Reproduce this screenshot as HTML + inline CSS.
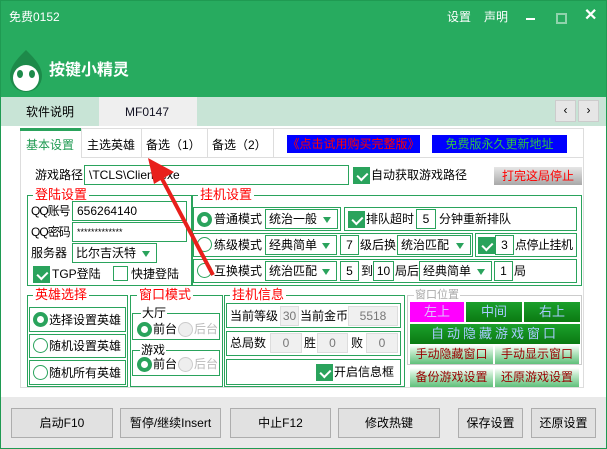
<!DOCTYPE html><html><head><meta charset="utf-8"><style>
*{margin:0;padding:0;box-sizing:border-box}
body{width:607px;height:449px;overflow:hidden;background:#fff;font-family:"Liberation Sans","Noto Sans CJK SC",sans-serif;font-size:12px;color:#000;position:relative}
.a{position:absolute}
.t{position:absolute;white-space:nowrap;line-height:1;font-size:12px}
.gb{position:absolute;border:1px solid #2aa35c}
.lbl{position:absolute;background:#fff;color:#f00;font-size:13px;line-height:1;padding:0 2px;white-space:nowrap}
.in{position:absolute;border:1px solid #2aa35c;background:#fff;font-size:12px;line-height:18px;padding-left:4px;white-space:nowrap;overflow:hidden}
.num{position:absolute;border:1px solid #2aa35c;background:#fff;text-align:center;font-size:12px;line-height:18px}
.sel{position:absolute;border:1px solid #2aa35c;background:#fff;font-size:12px;line-height:18px;padding-left:3px;white-space:nowrap}
.sel:after{content:"";position:absolute;right:6px;top:7px;border-left:4px solid transparent;border-right:4px solid transparent;border-top:6px solid #2aa35c}
.cb{position:absolute;width:17px;height:17px;background:#2aa35c}
.cb:after{content:"";position:absolute;left:3px;top:2px;width:8px;height:5px;border-left:2px solid #fff;border-bottom:2px solid #fff;transform:rotate(-45deg) translate(-1px,3px)}
.cbo{position:absolute;width:15px;height:15px;border:1px solid #2aa35c;background:#fff}
.rd{position:absolute;width:15px;height:15px;border-radius:50%;border:4px solid #2aa35c;background:#fff}
.ro{position:absolute;width:15px;height:15px;border-radius:50%;border:1px solid #2aa35c;background:#fff}
.rg{position:absolute;width:15px;height:15px;border-radius:50%;border:1px solid #ccc;background:#eee}
.gbtn{position:absolute;background:linear-gradient(#1ba02c,#0b7a12);color:#a8ccff;text-align:center;font-size:13px;line-height:20px}
.lbtn{position:absolute;background:linear-gradient(#fff 0%,#c8ecd0 30%,#5fc07a 100%);color:#900;text-align:center;font-size:12px;line-height:19px;white-space:nowrap}
.bb{position:absolute;top:408px;height:30px;border:1px solid #adadad;background:#e1e1e1;text-align:center;line-height:28px;font-size:12px}
.ib{position:absolute;border:1px solid #ddd;background:#f0f0f0;color:#777;text-align:center;font-size:12px;line-height:18px}
</style></head><body>
<div class="a" style="left:0;top:0;width:607px;height:449px;border:1px solid #1f9a52"></div>
<div class="a" style="left:1px;top:1px;width:605px;height:96px;background:#27ab5f"></div>
<div class="t" style="left:9px;top:11px;color:#fff">免费0152</div>
<div class="t" style="left:447px;top:11px;color:#fff">设置</div>
<div class="t" style="left:484px;top:11px;color:#fff">声明</div>
<div class="a" style="left:526px;top:18px;width:9px;height:2px;background:#fff"></div>
<div class="a" style="left:556px;top:13px;width:11px;height:11px;border:2px solid #8fd3ac"></div>
<div class="t" style="left:584px;top:8px;color:#fff;font-size:16px;font-weight:bold">✕</div>
<svg class="a" style="left:8px;top:48px" width="36" height="46" viewBox="0 0 36 46"><path d="M18 2 C26 10 34 18 34 28 A16 16 0 0 1 2 28 C2 18 10 10 18 2Z" fill="#1d8a4a"/><ellipse cx="18" cy="30" rx="13" ry="13" fill="#fff"/><ellipse cx="12" cy="26" rx="3" ry="4" fill="#1d8a4a"/><ellipse cx="24" cy="26" rx="3" ry="4" fill="#1d8a4a"/></svg>
<div class="t" style="left:49px;top:63px;color:#fff;font-size:16px;font-weight:bold">按键小精灵</div>
<div class="a" style="left:1px;top:97px;width:605px;height:29px;background:#c8e4d6"></div>
<div class="t" style="left:26px;top:106px">软件说明</div>
<div class="a" style="left:99px;top:97px;width:98px;height:29px;background:#efefef"></div>
<div class="t" style="left:125px;top:106px;color:#112">MF0147</div>
<div class="a" style="left:555px;top:100px;width:21px;height:22px;background:#e6e6e6;border:1px solid #ccc;text-align:center;line-height:19px">‹</div>
<div class="a" style="left:578px;top:100px;width:21px;height:22px;background:#e6e6e6;border:1px solid #ccc;text-align:center;line-height:19px">›</div>
<div class="a" style="left:1px;top:126px;width:605px;height:271px;background:#fff"></div>
<div class="a" style="left:20px;top:128px;width:564px;height:260px;border:1px solid #ddd"></div>
<div class="a" style="left:20px;top:128px;width:62px;height:3px;background:#2aa35c"></div>
<div class="a" style="left:81px;top:128px;width:1px;height:30px;background:#ddd"></div>
<div class="a" style="left:141px;top:128px;width:1px;height:30px;background:#ddd"></div>
<div class="a" style="left:207px;top:128px;width:1px;height:30px;background:#ddd"></div>
<div class="a" style="left:273px;top:128px;width:1px;height:30px;background:#ddd"></div>
<div class="a" style="left:82px;top:157px;width:501px;height:1px;background:#ddd"></div>
<div class="t" style="left:26px;top:139px;color:#1f9a52">基本设置</div>
<div class="t" style="left:87px;top:139px">主选英雄</div>
<div class="t" style="left:146px;top:139px">备选（1）</div>
<div class="t" style="left:212px;top:139px">备选（2）</div>
<div class="a" style="left:287px;top:135px;width:133px;height:18px;background:#0000ff;color:#f00;font-size:12px;line-height:18px;text-align:center;white-space:nowrap">《点击试用购买完整版》</div>
<div class="a" style="left:432px;top:135px;width:135px;height:18px;background:#0000ff;color:#2ec04a;font-size:12px;line-height:18px;text-align:center">免费版永久更新地址</div>
<div class="t" style="left:35px;top:169px">游戏路径</div>
<div class="in" style="left:84px;top:165px;width:265px;height:20px">\TCLS\Client.exe</div>
<div class="cb" style="left:353px;top:167px"></div>
<div class="t" style="left:371px;top:169px">自动获取游戏路径</div>
<div class="a" style="left:494px;top:167px;width:88px;height:18px;background:linear-gradient(#e6e6e6,#a8a8a8);color:#f00;text-align:center;line-height:18px;font-size:12px">打完这局停止</div>
<div class="gb" style="left:27px;top:195px;width:165px;height:91px"></div>
<div class="lbl" style="left:33px;top:188px">登陆设置</div>
<div class="t" style="left:31px;top:205px;letter-spacing:-1px">QQ账号</div>
<div class="in" style="left:72px;top:201px;width:115px;height:20px">656264140</div>
<div class="t" style="left:31px;top:226px;letter-spacing:-1px">QQ密码</div>
<div class="in" style="left:72px;top:222px;width:115px;height:20px;font-size:9px">*************</div>
<div class="t" style="left:31px;top:247px">服务器</div>
<div class="sel" style="left:72px;top:243px;width:85px;height:20px">比尔吉沃特</div>
<div class="cb" style="left:33px;top:266px"></div>
<div class="t" style="left:52px;top:268px">TGP登陆</div>
<div class="cbo" style="left:113px;top:266px"></div>
<div class="t" style="left:131px;top:268px">快捷登陆</div>
<div class="gb" style="left:192px;top:195px;width:390px;height:91px"></div>
<div class="lbl" style="left:198px;top:188px">挂机设置</div>
<div class="gb" style="left:193px;top:207px;width:148px;height:24px"></div>
<div class="rd" style="left:197px;top:212px"></div>
<div class="t" style="left:214px;top:213px">普通模式</div>
<div class="sel" style="left:265px;top:209px;width:73px;height:20px">统治一般</div>
<div class="gb" style="left:344px;top:207px;width:233px;height:24px"></div>
<div class="cb" style="left:348px;top:211px"></div>
<div class="t" style="left:366px;top:213px">排队超时</div>
<div class="num" style="left:416px;top:209px;width:20px;height:20px">5</div>
<div class="t" style="left:439px;top:213px">分钟重新排队</div>
<div class="gb" style="left:193px;top:233px;width:280px;height:24px"></div>
<div class="ro" style="left:197px;top:237px"></div>
<div class="t" style="left:214px;top:239px">练级模式</div>
<div class="sel" style="left:265px;top:235px;width:72px;height:20px">经典简单</div>
<div class="num" style="left:340px;top:235px;width:19px;height:20px">7</div>
<div class="t" style="left:360px;top:239px">级后换</div>
<div class="sel" style="left:397px;top:235px;width:74px;height:20px">统治匹配</div>
<div class="gb" style="left:475px;top:233px;width:102px;height:24px"></div>
<div class="cb" style="left:478px;top:237px"></div>
<div class="num" style="left:495px;top:235px;width:19px;height:20px">3</div>
<div class="t" style="left:515px;top:239px;letter-spacing:-0.5px">点停止挂机</div>
<div class="gb" style="left:193px;top:259px;width:384px;height:24px"></div>
<div class="ro" style="left:197px;top:263px"></div>
<div class="t" style="left:214px;top:265px">互换模式</div>
<div class="sel" style="left:265px;top:261px;width:72px;height:20px">统治匹配</div>
<div class="num" style="left:340px;top:261px;width:19px;height:20px">5</div>
<div class="t" style="left:361px;top:265px">到</div>
<div class="num" style="left:373px;top:261px;width:21px;height:20px">10</div>
<div class="t" style="left:395px;top:265px">局后</div>
<div class="sel" style="left:419px;top:261px;width:73px;height:20px">经典简单</div>
<div class="num" style="left:494px;top:261px;width:19px;height:20px">1</div>
<div class="t" style="left:514px;top:265px">局</div>
<div class="gb" style="left:27px;top:295px;width:101px;height:92px"></div>
<div class="lbl" style="left:33px;top:288px">英雄选择</div>
<div class="gb" style="left:29px;top:307px;width:97px;height:25px"></div>
<div class="rd" style="left:33px;top:312px"></div><div class="t" style="left:49px;top:314px">选择设置英雄</div>
<div class="gb" style="left:29px;top:334px;width:97px;height:24px"></div>
<div class="ro" style="left:33px;top:338px"></div><div class="t" style="left:49px;top:340px">随机设置英雄</div>
<div class="gb" style="left:29px;top:360px;width:97px;height:25px"></div>
<div class="ro" style="left:33px;top:365px"></div><div class="t" style="left:49px;top:367px">随机所有英雄</div>
<div class="gb" style="left:130px;top:295px;width:93px;height:92px"></div>
<div class="lbl" style="left:137px;top:288px">窗口模式</div>
<div class="gb" style="left:132px;top:313px;width:88px;height:27px"></div>
<div class="t" style="left:141px;top:307px;background:#fff;padding:0 1px">大厅</div>
<div class="rd" style="left:137px;top:322px"></div><div class="t" style="left:153px;top:323px">前台</div>
<div class="rg" style="left:178px;top:322px"></div><div class="t" style="left:194px;top:323px;color:#bbb">后台</div>
<div class="gb" style="left:132px;top:350px;width:88px;height:26px"></div>
<div class="t" style="left:140px;top:344px;background:#fff;padding:0 1px">游戏</div>
<div class="rd" style="left:137px;top:357px"></div><div class="t" style="left:153px;top:358px">前台</div>
<div class="rg" style="left:178px;top:357px"></div><div class="t" style="left:194px;top:358px;color:#bbb">后台</div>
<div class="gb" style="left:224px;top:295px;width:181px;height:92px"></div>
<div class="lbl" style="left:230px;top:288px">挂机信息</div>
<div class="gb" style="left:226px;top:303px;width:175px;height:25px"></div>
<div class="t" style="left:230px;top:310px">当前等级</div>
<div class="ib" style="left:280px;top:306px;width:19px;height:20px">30</div>
<div class="t" style="left:300px;top:310px">当前金币</div>
<div class="ib" style="left:348px;top:306px;width:50px;height:20px">5518</div>
<div class="gb" style="left:226px;top:331px;width:175px;height:25px"></div>
<div class="t" style="left:230px;top:337px">总局数</div>
<div class="ib" style="left:270px;top:333px;width:32px;height:20px">0</div>
<div class="t" style="left:304px;top:337px">胜</div>
<div class="ib" style="left:317px;top:333px;width:31px;height:20px">0</div>
<div class="t" style="left:351px;top:337px">败</div>
<div class="ib" style="left:366px;top:333px;width:32px;height:20px">0</div>
<div class="gb" style="left:226px;top:359px;width:175px;height:26px"></div>
<div class="cb" style="left:316px;top:364px"></div>
<div class="t" style="left:334px;top:366px">开启信息框</div>
<div class="a" style="left:407px;top:295px;width:175px;height:70px;border:1px solid #ccc"></div>
<div class="t" style="left:414px;top:290px;background:#fff;color:#aaa;font-size:11px;padding:0 1px">窗口位置</div>
<div class="gbtn" style="left:410px;top:302px;width:54px;background:#ff00ff;color:#e0c0ff">左上</div>
<div class="gbtn" style="left:466px;top:302px;width:56px">中间</div>
<div class="gbtn" style="left:524px;top:302px;width:56px">右上</div>
<div class="gbtn" style="left:410px;top:324px;width:170px;letter-spacing:3px">自动隐藏游戏窗口</div>
<div class="lbtn" style="left:410px;top:345px;width:83px">手动隐藏窗口</div>
<div class="lbtn" style="left:495px;top:345px;width:84px">手动显示窗口</div>
<div class="lbtn" style="left:410px;top:368px;width:83px">备份游戏设置</div>
<div class="lbtn" style="left:495px;top:368px;width:84px">还原游戏设置</div>
<div class="a" style="left:1px;top:397px;width:605px;height:51px;background:#e9e9e9"></div>
<div class="bb" style="left:11px;width:102px">启动F10</div>
<div class="bb" style="left:120px;width:101px">暂停/继续Insert</div>
<div class="bb" style="left:230px;width:101px">中止F12</div>
<div class="bb" style="left:338px;width:102px">修改热键</div>
<div class="bb" style="left:458px;width:65px">保存设置</div>
<div class="bb" style="left:531px;width:65px">还原设置</div>
<svg class="a" style="left:140px;top:150px" width="80" height="130" viewBox="0 0 80 130"><line x1="73" y1="125" x2="20" y2="25" stroke="#e8201c" stroke-width="4"/><polygon points="8,8 34,22 14,34" fill="#e8201c"/></svg>
</body></html>
